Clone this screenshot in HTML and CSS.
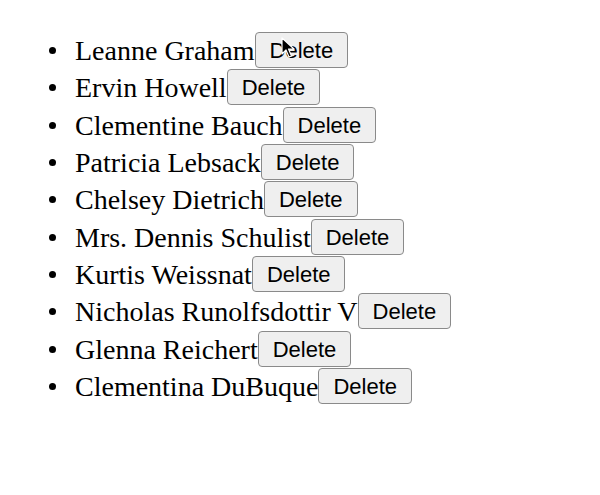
FILE: index.html
```html
<!DOCTYPE html>
<html lang="en">
<head>
    <meta charset="UTF-8">
    <meta name="viewport" content="width=device-width, initial-scale=1.0">
    <title>Users</title>
    <link rel="stylesheet" href="styles.css">
</head>
<body>
    <ul class="users">
        <li>Leanne Graham<button>Delete</button></li>
        <li>Ervin Howell<button>Delete</button></li>
        <li>Clementine Bauch<button>Delete</button></li>
        <li>Patricia Lebsack<button>Delete</button></li>
        <li>Chelsey Dietrich<button>Delete</button></li>
        <li>Mrs. Dennis Schulist<button>Delete</button></li>
        <li>Kurtis Weissnat<button>Delete</button></li>
        <li>Nicholas Runolfsdottir V<button>Delete</button></li>
        <li>Glenna Reichert<button>Delete</button></li>
        <li>Clementina DuBuque<button>Delete</button></li>
    </ul>

    <!-- mouse pointer caught in the screenshot -->
    <svg class="cursor" width="14" height="22" viewBox="0 0 14 22">
        <path d="M1 1 L1 17 L5 13 L8 20 L10.5 19 L7.5 12 L13 12 Z" fill="#000" stroke="#fff" stroke-width="1.2" stroke-linejoin="round"/>
    </svg>
</body>
</html>
```

FILE: styles.css
```css
body {
    margin: 12px;
    font-family: "Liberation Serif", "Times New Roman", serif;
    font-size: 28px;
    background: #fff;
    color: #000;
    position: relative;
}

.users {
    margin: 20px 0;
    padding-left: 63px;
    list-style: none;
}

.users li {
    line-height: 37.33px;
}

/* round bullet, drawn by hand so the gap matches */
.users li::before {
    content: "";
    display: inline-block;
    width: 7px;
    height: 7px;
    margin-left: -26px;
    margin-right: 19px;
    border-radius: 50%;
    background: #000;
    vertical-align: 6px;
}

.users button {
    font-family: "Liberation Sans", Arial, sans-serif;
    font-size: 22px;
    line-height: 24px;
    padding: 6px 14px 4px;
    background-color: #efefef;
    border: 1px solid #8a8a8a;
    border-radius: 4px;
    color: #000;
    vertical-align: top;
}

.cursor {
    position: absolute;
    left: 269px;
    top: 25px;
}
```
